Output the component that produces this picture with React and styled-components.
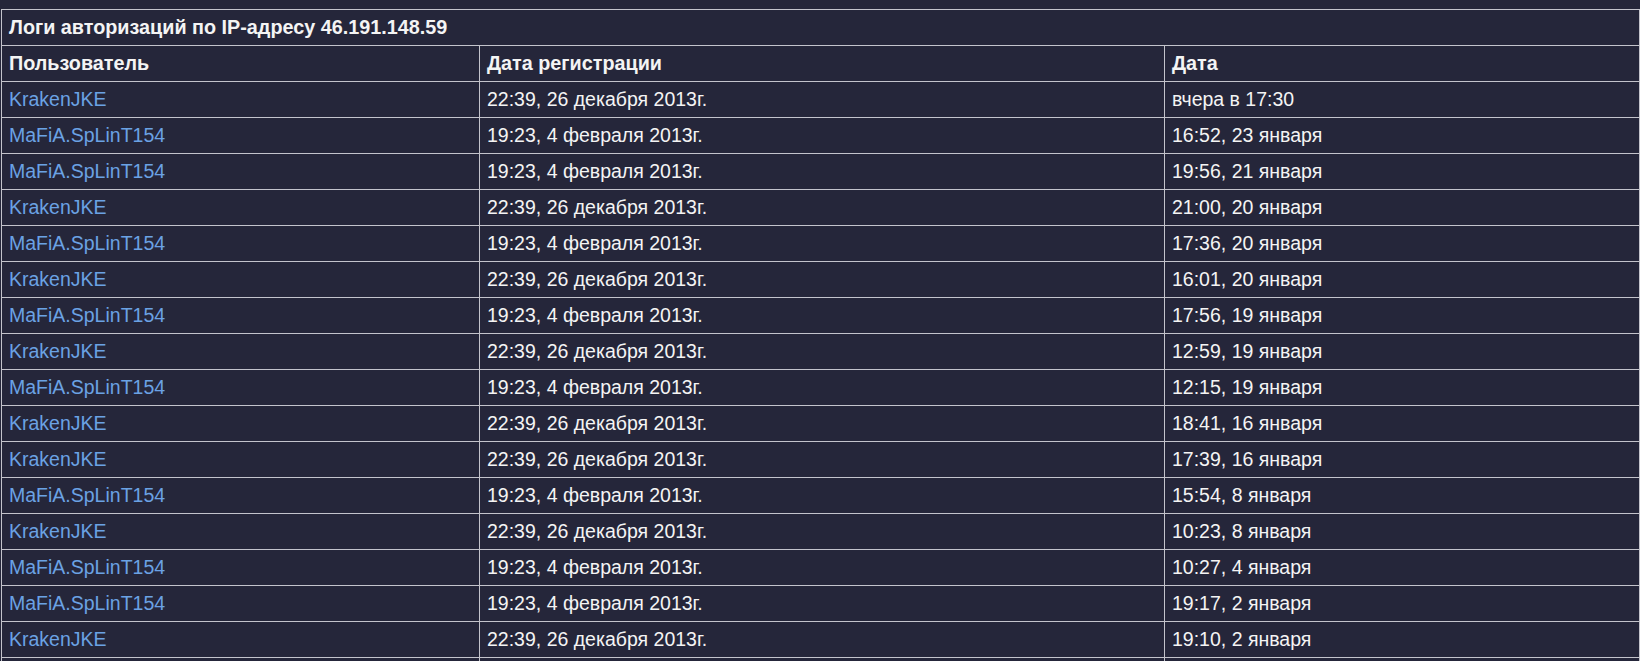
import React from 'react';
import styled, { createGlobalStyle } from 'styled-components';

const GlobalStyle = createGlobalStyle`
  html, body {
    margin: 0;
    padding: 0;
    background: #25263a;
  }
  body {
    font-family: "Liberation Sans", Arial, sans-serif;
    color: #f4f4f4;
  }
`;

const Page = styled.div`
  padding: 9px 1px 0 1px;
  background: #25263a;
  min-height: 661px;
  box-sizing: border-box;
`;

const Table = styled.table`
  width: 1638px;
  border-collapse: collapse;
  table-layout: fixed;
  font-size: 19.5px;
`;

const Row = styled.tr`
  height: 36px;
`;

const Cell = styled.td`
  border: 1px solid #c4c4cc;
  padding: 0 7px;
  vertical-align: middle;
  white-space: nowrap;
  font-weight: ${(p) => (p.$bold ? 'bold' : 'normal')};
  font-size: ${(p) => (p.$bold ? '19.8px' : '19.5px')};
  color: #f4f4f4;
`;

const UserLink = styled.a`
  color: #6ba2e4;
  text-decoration: none;
`;

const rows = [
  ['KrakenJKE', '22:39, 26 декабря 2013г.', 'вчера в 17:30'],
  ['MaFiA.SpLinT154', '19:23, 4 февраля 2013г.', '16:52, 23 января'],
  ['MaFiA.SpLinT154', '19:23, 4 февраля 2013г.', '19:56, 21 января'],
  ['KrakenJKE', '22:39, 26 декабря 2013г.', '21:00, 20 января'],
  ['MaFiA.SpLinT154', '19:23, 4 февраля 2013г.', '17:36, 20 января'],
  ['KrakenJKE', '22:39, 26 декабря 2013г.', '16:01, 20 января'],
  ['MaFiA.SpLinT154', '19:23, 4 февраля 2013г.', '17:56, 19 января'],
  ['KrakenJKE', '22:39, 26 декабря 2013г.', '12:59, 19 января'],
  ['MaFiA.SpLinT154', '19:23, 4 февраля 2013г.', '12:15, 19 января'],
  ['KrakenJKE', '22:39, 26 декабря 2013г.', '18:41, 16 января'],
  ['KrakenJKE', '22:39, 26 декабря 2013г.', '17:39, 16 января'],
  ['MaFiA.SpLinT154', '19:23, 4 февраля 2013г.', '15:54, 8 января'],
  ['KrakenJKE', '22:39, 26 декабря 2013г.', '10:23, 8 января'],
  ['MaFiA.SpLinT154', '19:23, 4 февраля 2013г.', '10:27, 4 января'],
  ['MaFiA.SpLinT154', '19:23, 4 февраля 2013г.', '19:17, 2 января'],
  ['KrakenJKE', '22:39, 26 декабря 2013г.', '19:10, 2 января'],
];

export default function App() {
  return (
    <Page>
      <GlobalStyle />
      <Table>
        <colgroup>
          <col style={{ width: 478 }} />
          <col style={{ width: 685 }} />
          <col style={{ width: 475 }} />
        </colgroup>
        <tbody>
          <Row>
            <Cell $bold colSpan={3}>Логи авторизаций по IP-адресу 46.191.148.59</Cell>
          </Row>
          <Row>
            <Cell $bold>Пользователь</Cell>
            <Cell $bold>Дата регистрации</Cell>
            <Cell $bold>Дата</Cell>
          </Row>
          {rows.map((r, i) => (
            <Row key={i}>
              <Cell>
                <UserLink href="#">{r[0]}</UserLink>
              </Cell>
              <Cell>{r[1]}</Cell>
              <Cell>{r[2]}</Cell>
            </Row>
          ))}
          <Row>
            <Cell />
            <Cell />
            <Cell />
          </Row>
        </tbody>
      </Table>
    </Page>
  );
}
